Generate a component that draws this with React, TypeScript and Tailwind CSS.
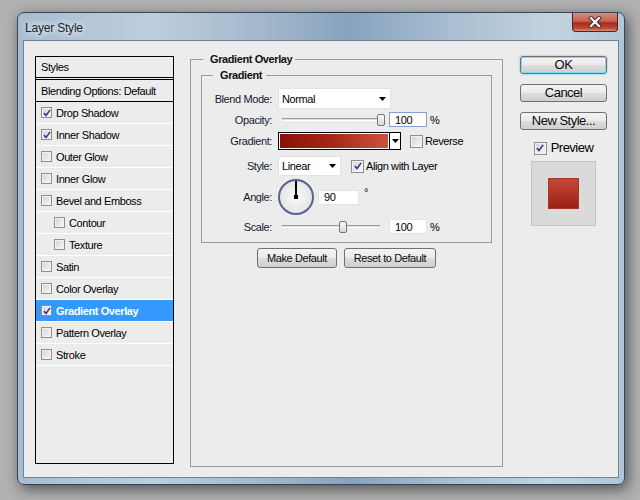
import React from 'react'

interface StyleRow {
    label: string
    checked?: boolean
    indent?: boolean
    selected?: boolean
}

const rows: StyleRow[] = [
    { label: 'Drop Shadow', checked: true },
    { label: 'Inner Shadow', checked: true },
    { label: 'Outer Glow' },
    { label: 'Inner Glow' },
    { label: 'Bevel and Emboss' },
    { label: 'Contour', indent: true },
    { label: 'Texture', indent: true },
    { label: 'Satin' },
    { label: 'Color Overlay' },
    { label: 'Gradient Overlay', checked: true, selected: true },
    { label: 'Pattern Overlay' },
    { label: 'Stroke' },
]

const Check: React.FC<{ on?: boolean; small?: boolean }> = ({ on, small }) => (
    <span className={`flex items-center justify-center shrink-0 border border-[#8f8f8f] bg-linear-to-br from-[#d2d2d2] to-[#fbfbfb] shadow-[inset_0_0_0_1px_#f2f2f2] ${small ? 'w-[11px] h-[11px]' : 'w-[13px] h-[13px]'}`}>
        {on && (
            <svg viewBox="0 0 9 9" className="w-[8px] h-[8px]">
                <path d="M1 4.6 L3.4 7.2 L8 1" fill="none" stroke="#2b3f8f" strokeWidth="1.8" />
            </svg>
        )}
    </span>
)

const Arrow = () => (
    <svg width="7" height="4" viewBox="0 0 7 4">
        <path d="M0 0H7L3.5 4Z" fill="#000" />
    </svg>
)

const Btn: React.FC<{ children: React.ReactNode; cls?: string }> = ({ children, cls }) => (
    <button className={`flex items-center justify-center border border-[#707070] rounded-[3px] bg-[linear-gradient(#f3f3f3_0%,#ebebeb_48%,#dddddd_52%,#cfcfcf_100%)] text-[#0b0b0b] ${cls ?? ''}`}>
        {children}
    </button>
)

const Slider: React.FC<{ pos: number }> = ({ pos }) => (
    <div className="relative w-[108px] h-[15px] flex items-center pl-[4px] pr-[6px]">
        <div className="w-full h-[3px] border-t border-[#9c9c9c] border-b border-b-white bg-[#dedede]"></div>
        <div className="absolute top-[2px] w-[8px] h-[12px] rounded-[2px] border border-[#767676] bg-linear-to-b from-[#fbfbfb] to-[#d8d8d8]" style={{ left: pos }}></div>
    </div>
)

const Label: React.FC<{ children: React.ReactNode }> = ({ children }) => (
    <span className="w-[71px] pr-[1px] text-right text-[#141a2c]">{children}</span>
)

export default function App() {
    return (
        <div className="w-[640px] h-[500px] bg-[#b1b1b1] pl-[17px] pt-[12px] font-['Liberation_Sans',Arial,sans-serif] text-[11px] leading-[14px] tracking-[-0.4px] text-black">
            <div className="w-[608px] h-[473px] rounded-[7px] border border-[#34465a] bg-[linear-gradient(90deg,#a9bccf_0%,#bdcedd_22%,#a3b8cc_40%,#88a3bd_55%,#a9bfd2_72%,#c3d3e0_88%,#b2c6d7_100%)] shadow-[3px_4px_14px_rgba(0,0,0,0.55)] flex flex-col">
                {/* title bar */}
                <div className="h-[27px] flex justify-between pl-[7px] pr-[6px]">
                    <span className="mt-[8px] text-[12px] tracking-[-0.2px] text-[#1b2633] [text-shadow:0_0_6px_#eef4fa,0_0_10px_#eef4fa]">Layer Style</span>
                    <div className="w-[46px] h-[19px] rounded-b-[4px] border border-t-0 border-[#4e2420] bg-[linear-gradient(#d88c80_0%,#c8604f_45%,#a82a1b_55%,#c24a36_85%,#e0907a_100%)] flex items-center justify-center">
                        <svg width="14" height="12" viewBox="0 0 14 12">
                            <path d="M3 2L11 10M11 2L3 10" stroke="#3a2a2a" strokeWidth="4" strokeLinecap="square" />
                            <path d="M3 2L11 10M11 2L3 10" stroke="#ffffff" strokeWidth="2.2" strokeLinecap="square" />
                        </svg>
                    </div>
                </div>

                {/* client area */}
                <div className="mx-[5px] mb-[6px] flex-1 border border-[#6f8399] bg-[#ececec] flex items-start pl-[11px] pt-[11px]">
                    {/* styles list */}
                    <div className="mt-[4px] w-[139px] h-[408px] border border-black flex flex-col">
                        <div className="h-[21px] border-b border-black flex items-center pl-[5px]">Styles</div>
                        <div className="h-[1px]"></div>
                        <div className="h-[23px] border-y border-black flex items-center pl-[5px]">Blending Options: Default</div>
                        {rows.map((r) => (
                            <div key={r.label} className={`h-[22px] flex items-center gap-[4px] border-b border-white ${r.indent ? 'pl-[18px]' : 'pl-[5px]'} ${r.selected ? 'bg-[#3399ff] text-white font-bold' : ''}`}>
                                <Check on={r.checked} small />
                                <span>{r.label}</span>
                            </div>
                        ))}
                    </div>

                    {/* gradient overlay group */}
                    <fieldset className="ml-[16px] w-[313px] h-[415px] border border-[#9b9b9b] p-0">
                        <legend className="ml-[12px] pl-[7px] pr-[3px] font-bold text-[#111]">Gradient Overlay</legend>
                        <div className="px-[10px] pt-[2px] flex flex-col">
                            <fieldset className="border border-[#9b9b9b] p-0">
                                <legend className="ml-[11px] pl-[7px] pr-[4px] font-bold text-[#111]">Gradient</legend>
                                <div className="pt-[6px] pb-[8px] flex flex-col">
                                    <div className="h-[21px] flex items-center gap-[5px]">
                                        <Label>Blend Mode:</Label>
                                        <div className="w-[113px] h-[21px] bg-white border border-[#e2e2e2] flex items-center justify-between pl-[3px] pr-[4px]">
                                            <span>Normal</span>
                                            <Arrow />
                                        </div>
                                    </div>
                                    <div className="mt-[3px] h-[15px] flex items-center gap-[5px]">
                                        <Label>Opacity:</Label>
                                        <Slider pos={99} />
                                        <div className="ml-[-2px] w-[38px] h-[15px] bg-white border border-[#7ea3cf] flex items-center pl-[5px]">100</div>
                                        <span className="ml-[-2px]">%</span>
                                    </div>
                                    <div className="mt-[5px] h-[18px] flex items-center gap-[5px]">
                                        <Label>Gradient:</Label>
                                        <div className="w-[123px] h-[18px] border border-black bg-white flex">
                                            <div className="flex-1 m-[1px] bg-linear-to-r from-[#8a1107] via-[#a52818] to-[#cb533d]"></div>
                                            <div className="w-[11px] border-l border-black flex items-center justify-center">
                                                <Arrow />
                                            </div>
                                        </div>
                                        <span className="ml-[4px]"><Check /></span>
                                        <span className="ml-[-3px]">Reverse</span>
                                    </div>
                                    <div className="mt-[6px] h-[20px] flex items-center gap-[5px]">
                                        <Label>Style:</Label>
                                        <div className="w-[63px] h-[20px] bg-white border border-[#e2e2e2] flex items-center justify-between pl-[3px] pr-[4px]">
                                            <span>Linear</span>
                                            <Arrow />
                                        </div>
                                        <span className="ml-[5px]"><Check on /></span>
                                        <span className="ml-[-3px]">Align with Layer</span>
                                    </div>
                                    <div className="mt-[3px] h-[36px] flex items-center gap-[5px]">
                                        <Label>Angle:</Label>
                                        <div className="relative w-[36px] h-[36px] rounded-full border-2 border-[#54648a] bg-radial from-[#fbfbfb] to-[#dcdcdc]">
                                            <div className="absolute left-[15px] top-0 w-[2px] h-[16px] bg-black"></div>
                                            <div className="absolute left-[14px] top-[14px] w-[4px] h-[4px] bg-black"></div>
                                        </div>
                                        <div className="ml-[-1px] w-[41px] h-[15px] bg-white border border-[#e4e4e4] flex items-center pl-[5px]">90</div>
                                        <span className="self-start mt-[6px]">°</span>
                                    </div>
                                    <div className="mt-[4px] h-[15px] flex items-center gap-[5px]">
                                        <Label>Scale:</Label>
                                        <Slider pos={61} />
                                        <div className="ml-[-2px] w-[38px] h-[15px] bg-white border border-[#e4e4e4] flex items-center pl-[5px]">100</div>
                                        <span className="ml-[-2px]">%</span>
                                    </div>
                                </div>
                            </fieldset>
                            <div className="mt-[5px] flex justify-center gap-[7px]">
                                <Btn cls="w-[80px] h-[20px]">Make Default</Btn>
                                <Btn cls="w-[92px] h-[20px]">Reset to Default</Btn>
                            </div>
                        </div>
                    </fieldset>

                    {/* right column */}
                    <div className="ml-[17px] mt-[4px] w-[87px] flex flex-col items-center text-[13px] leading-[16px] tracking-[-0.5px]">
                        <Btn cls="w-[87px] h-[18px] border-[#3c7fb1] shadow-[inset_0_0_0_1px_#7fdcf8,0_0_2px_#4fb5ea]">OK</Btn>
                        <Btn cls="mt-[10px] w-[87px] h-[18px]">Cancel</Btn>
                        <Btn cls="mt-[10px] w-[87px] h-[18px]">New Style...</Btn>
                        <div className="mt-[10px] flex items-center gap-[4px]">
                            <Check on />
                            <span>Preview</span>
                        </div>
                        <div className="mt-[5px] w-[65px] h-[65px] bg-[#dadada] border border-[#c6c6c6] flex items-center justify-center">
                            <div className="w-[31px] h-[31px] bg-linear-to-b from-[#c44836] to-[#9d2015] border border-[#a83423]"></div>
                        </div>
                    </div>
                </div>
            </div>
        </div>
    )
}
